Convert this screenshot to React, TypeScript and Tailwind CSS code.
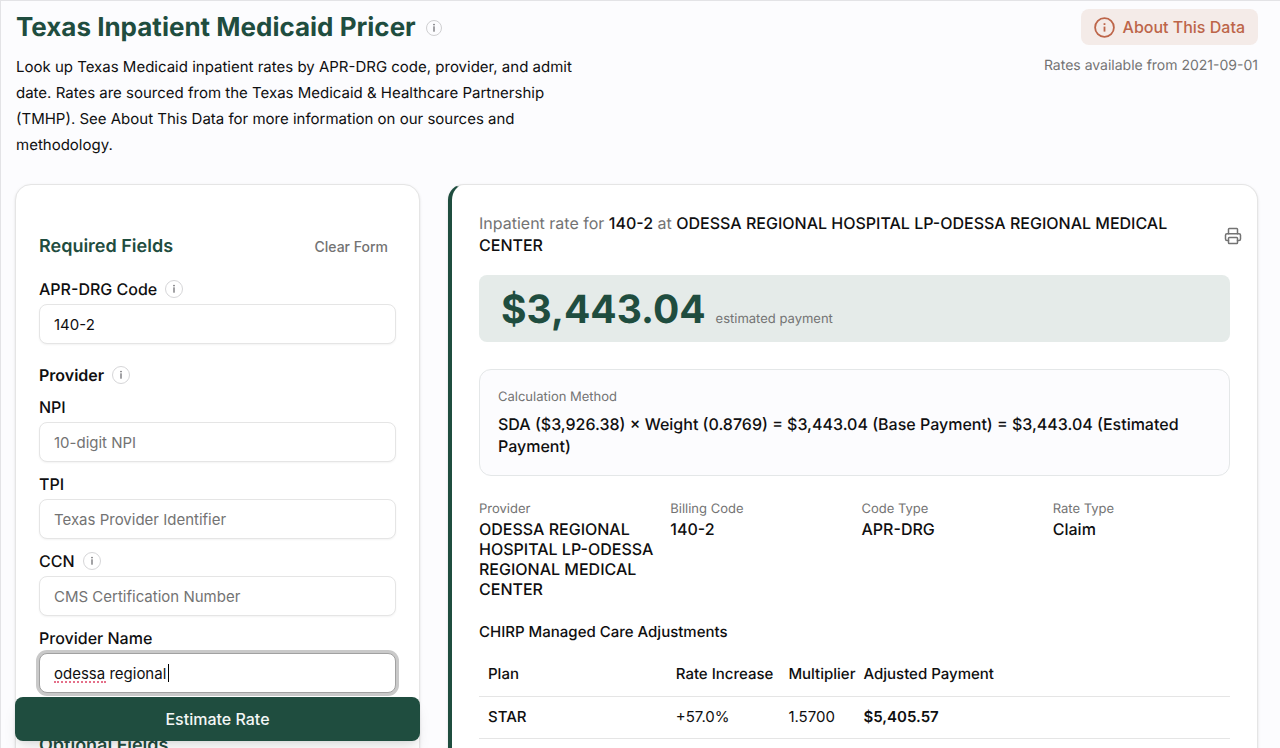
import { useState } from "react";
import type { ReactNode } from "react";
import { Printer } from "lucide-react";

function Hint({ label, small = false }: { label: string; small?: boolean }) {
  return (
    <button
      type="button"
      aria-label={label}
      className={
        small
          ? "flex size-4 items-center justify-center rounded-full border border-[#cfcfd1] text-[#66666a]"
          : "flex size-[18px] items-center justify-center rounded-full border border-[#d6d6d8] text-[#66666a]"
      }
    >
      <svg viewBox="0 0 10 10" className="size-[10px]" fill="currentColor" aria-hidden="true">
        <rect x="4.3" y="0.9" width="1.4" height="1.4" />
        <rect x="4.4" y="3.3" width="1.2" height="5.4" />
      </svg>
    </button>
  );
}

function AboutIcon() {
  return (
    <svg viewBox="0 0 21 21" className="size-[21px]" fill="none" stroke="currentColor" aria-hidden="true">
      <circle cx="10.5" cy="10.5" r="9.4" strokeWidth="1.8" />
      <path d="M10.5 9.6v5" strokeWidth="1.8" />
      <path d="M10.5 6.2v1.8" strokeWidth="1.8" />
    </svg>
  );
}

type FieldProps = {
  id: string;
  label: string;
  value: string;
  onChange: (value: string) => void;
  placeholder?: string;
  hint?: string;
  active?: boolean;
  children?: ReactNode;
};

function Field({ id, label, value, onChange, placeholder, hint, active = false, children }: FieldProps) {
  return (
    <div className="flex flex-col gap-[5px]">
      <div className="flex h-5 items-center gap-2">
        <label htmlFor={id} className="text-[16px] font-medium">
          {label}
        </label>
        {hint && <Hint label={hint} />}
      </div>
      <div className="relative">
        <input
          id={id}
          type="text"
          value={value}
          placeholder={placeholder}
          spellCheck={false}
          onChange={(e) => onChange(e.target.value)}
          className={
            active
              ? "block h-10 w-full rounded-lg border border-[#a1a1a1] bg-white px-[14px] ring-[3px] ring-[#c9c9c9] outline-none"
              : "block h-10 w-full rounded-lg border border-[#e5e5e5] bg-white px-[14px] shadow-xs outline-none placeholder:text-[#737373]"
          }
        />
        {children}
      </div>
    </div>
  );
}

const details = [
  { term: "Provider", value: "ODESSA REGIONAL HOSPITAL LP-ODESSA REGIONAL MEDICAL CENTER" },
  { term: "Billing Code", value: "140-2" },
  { term: "Code Type", value: "APR-DRG" },
  { term: "Rate Type", value: "Claim" },
];

const plans = [{ plan: "STAR", increase: "+57.0%", multiplier: "1.5700", payment: "$5,405.57" }];

const emptyForm = { code: "", npi: "", tpi: "", ccn: "", name: "" };

export default function App() {
  const [form, setForm] = useState({ ...emptyForm, code: "140-2", name: "odessa regional" });
  const set = (key: keyof typeof emptyForm) => (value: string) => setForm({ ...form, [key]: value });

  return (
    <div className="min-h-screen border-t border-l border-[#e3e3e6] bg-[#fcfcfe] pr-[22px] pl-[14px] font-['Inter',sans-serif] text-[15px] leading-[22px] text-[#0f0f10] [text-rendering:geometricPrecision]">
      <header className="flex items-start justify-between pt-2 pl-px">
        <div className="w-[580px]">
          <div className="flex h-[38px] items-center gap-[10px]">
            <h1 className="text-[26px] font-bold whitespace-nowrap text-[#1f4d3f]">
              Texas Inpatient Medicaid Pricer
            </h1>
            <Hint label="About this tool" small />
          </div>
          <p className="mt-[7px] leading-[26px]">
            Look up Texas Medicaid inpatient rates by APR-DRG code, provider, and admit date. Rates are
            sourced from the Texas Medicaid &amp; Healthcare Partnership (TMHP). See About This Data for
            more information on our sources and methodology.
          </p>
        </div>
        <div className="flex flex-col items-end gap-[10px]">
          <button
            type="button"
            className="flex h-9 items-center gap-2 rounded-lg bg-[#f4ebe8] px-[13px] text-[16px] font-medium text-[#bd6549]"
          >
            <AboutIcon />
            About This Data
          </button>
          <p className="text-[14px] text-[#737373]">Rates available from 2021-09-01</p>
        </div>
      </header>

      <main className="mt-[26px] grid grid-cols-[1fr_2fr] gap-7">
        <form className="min-w-0" onSubmit={(e) => e.preventDefault()}>
          <div className="rounded-2xl border border-[#e5e5e5] bg-white px-[23px] pt-[49px] pb-8 shadow-sm">
            <div className="flex h-[26px] items-center justify-between pr-2">
              <h2 className="text-[18px] font-semibold text-[#1f4d3f]">Required Fields</h2>
              <button
                type="button"
                className="text-[14px] font-medium text-[#737373]"
                onClick={() => setForm(emptyForm)}
              >
                Clear Form
              </button>
            </div>
            <div className="mt-[19px]">
              <Field
                id="code"
                label="APR-DRG Code"
                hint="About APR-DRG codes"
                value={form.code}
                onChange={set("code")}
              />
            </div>
            <div role="group" aria-labelledby="provider" className="mt-5 flex flex-col gap-3">
              <div className="flex h-[21px] items-center gap-2">
                <h3 id="provider" className="text-[16px] font-semibold">
                  Provider
                </h3>
                <Hint label="About providers" />
              </div>
              <Field id="npi" label="NPI" placeholder="10-digit NPI" value={form.npi} onChange={set("npi")} />
              <Field
                id="tpi"
                label="TPI"
                placeholder="Texas Provider Identifier"
                value={form.tpi}
                onChange={set("tpi")}
              />
              <Field
                id="ccn"
                label="CCN"
                hint="About CCN"
                placeholder="CMS Certification Number"
                value={form.ccn}
                onChange={set("ccn")}
              />
              <Field id="name" label="Provider Name" value={form.name} onChange={set("name")} active>
                {form.name === "odessa regional" && (
                  <>
                    <span className="pointer-events-none absolute top-[28px] left-[15px] w-[52px] border-b-2 border-dotted border-[#e5708a]" />
                    <span className="pointer-events-none absolute top-[11px] left-[129px] h-[18px] w-px bg-black" />
                  </>
                )}
              </Field>
            </div>
            <div className="relative">
              <button
                type="submit"
                className="absolute -inset-x-6 top-1 h-11 rounded-lg bg-[#1f4d3f] text-[16px] font-medium text-[#f3f6f5] shadow-lg"
              >
                Estimate Rate
              </button>
            </div>
            <h2 className="mt-[42px] text-[18px] font-semibold text-[#1f4d3f]">Optional Fields</h2>
          </div>
        </form>

        <section className="min-w-0 rounded-2xl border border-l-4 border-[#e5e5e5] border-l-[#1f4d3f] bg-white p-[27px] shadow-sm">
          <div className="flex items-center justify-between gap-6">
            <p className="max-w-[700px] text-[16px] leading-[22px] text-[#737373]">
              Inpatient rate for <strong className="font-medium text-[#0f0f10]">140-2</strong> at{" "}
              <strong className="font-medium text-[#0f0f10]">
                ODESSA REGIONAL HOSPITAL LP-ODESSA REGIONAL MEDICAL CENTER
              </strong>
            </p>
            <button type="button" aria-label="Print" className="-mr-3 pt-1 text-[#737373]">
              <Printer className="size-[18px]" strokeWidth={2} aria-hidden="true" />
            </button>
          </div>

          <div className="mt-[19px] flex h-[67px] items-baseline gap-[10px] rounded-lg bg-[#e5ebe9] px-[22px] pt-[13px]">
            <span className="text-[39px] leading-[44px] font-bold text-[#1f4d3f]">$3,443.04</span>
            <span className="text-[13px] text-[#737373]">estimated payment</span>
          </div>

          <div className="mt-[27px] rounded-xl border border-[#e4e7e8] bg-[#fcfcfe] px-[18px] pt-4 pb-[18px]">
            <h3 className="text-[13px] text-[#737373]">Calculation Method</h3>
            <p className="mt-[5px] text-[16px] leading-[22px] font-medium">
              SDA ($3,926.38) × Weight (0.8769) = $3,443.04 (Base Payment) = $3,443.04 (Estimated Payment)
            </p>
          </div>

          <dl className="mt-[23px] grid grid-cols-4 gap-[14px]">
            {details.map((item) => (
              <div key={item.term}>
                <dt className="text-[13px] leading-5 text-[#737373]">{item.term}</dt>
                <dd className="text-[16px] leading-5 font-medium">{item.value}</dd>
              </div>
            ))}
          </dl>

          <h3 className="mt-[22px] font-medium">CHIRP Managed Care Adjustments</h3>
          <table className="mt-[10px] w-full table-fixed text-left whitespace-nowrap">
            <thead>
              <tr className="h-[43px] border-b border-[#e5e5e5]">
                <th className="w-1/4 px-[9px] font-medium">Plan</th>
                <th className="w-[15%] px-[9px] font-medium">Rate Increase</th>
                <th className="w-[10%] px-[9px] font-medium">Multiplier</th>
                <th className="px-[9px] font-medium">Adjusted Payment</th>
              </tr>
            </thead>
            <tbody>
              {plans.map((row) => (
                <tr key={row.plan} className="h-[42px] border-b border-[#e5e5e5]">
                  <td className="px-[9px] font-medium">{row.plan}</td>
                  <td className="px-[9px]">{row.increase}</td>
                  <td className="px-[9px]">{row.multiplier}</td>
                  <td className="px-[9px] font-semibold">{row.payment}</td>
                </tr>
              ))}
            </tbody>
          </table>
        </section>
      </main>
    </div>
  );
}
